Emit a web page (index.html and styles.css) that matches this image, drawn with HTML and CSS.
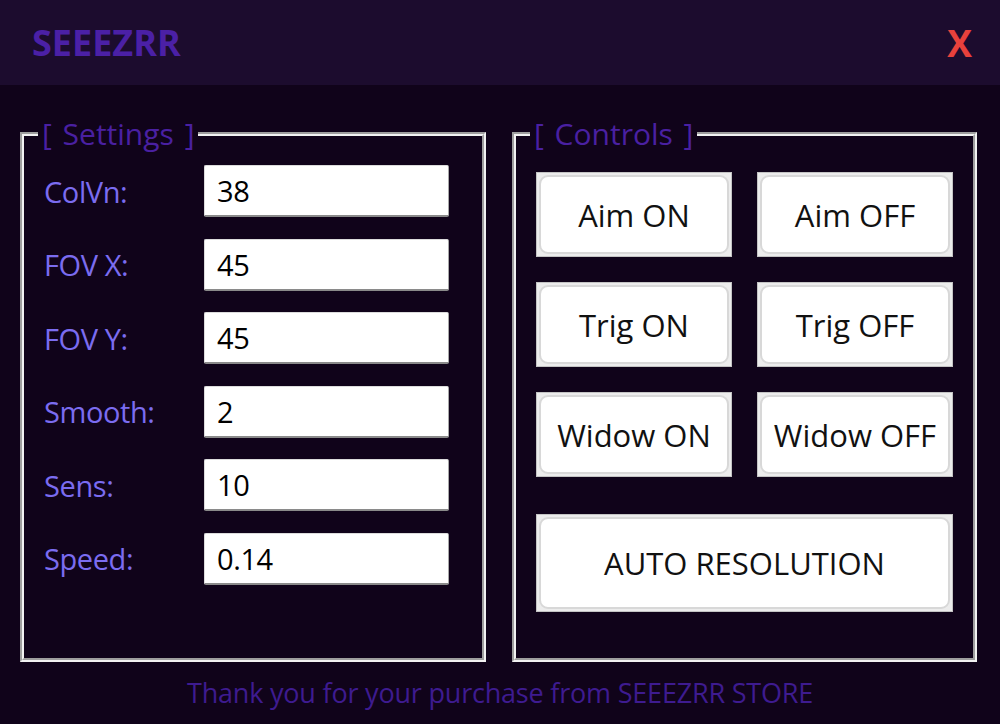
FILE: index.html
```html
<!DOCTYPE html>
<html lang="en">
<head>
    <meta charset="UTF-8">
    <meta name="viewport" content="width=device-width, initial-scale=1.0">
    <title>SEEEZRR</title>
    <link rel="stylesheet" href="styles.css">
</head>
<body>
    <div class="window">
        <div class="titlebar">
            <span class="title">SEEEZRR</span>
            <span class="close">X</span>
        </div>

        <div class="main">
            <fieldset class="group settings">
                <legend>[ Settings ]</legend>
                <div class="form">
                    <label>ColVn:</label>
                    <input type="text" class="field" value="38">
                    <label>FOV X:</label>
                    <input type="text" class="field" value="45">
                    <label>FOV Y:</label>
                    <input type="text" class="field" value="45">
                    <label>Smooth:</label>
                    <input type="text" class="field" value="2">
                    <label>Sens:</label>
                    <input type="text" class="field" value="10">
                    <label>Speed:</label>
                    <input type="text" class="field" value="0.14">
                </div>
            </fieldset>

            <fieldset class="group controls">
                <legend>[ Controls ]</legend>
                <div class="buttons">
                    <button><span>Aim ON</span></button>
                    <button><span>Aim OFF</span></button>
                    <button><span>Trig ON</span></button>
                    <button><span>Trig OFF</span></button>
                    <button><span>Widow ON</span></button>
                    <button><span>Widow OFF</span></button>
                    <button class="wide"><span>AUTO RESOLUTION</span></button>
                </div>
            </fieldset>
        </div>

        <div class="footer">Thank you for your purchase from SEEEZRR STORE</div>
    </div>
</body>
</html>
```

FILE: styles.css
```css
/* window */
body {
    margin: 0;
    padding: 0;
    background-color: #10031a;
    font-family: "Open Sans", "Noto Sans", sans-serif;
}

.window {
    width: 1000px;
    height: 724px;
    background-color: #10031a;
}

.titlebar {
    height: 85px;
    background-color: #1c0c2e;
    display: flex;
    align-items: center;
    justify-content: space-between;
    padding: 0 28px 0 32px;
}

.title {
    color: #4b20a6;
    font-size: 36px;
    font-weight: 700;
}

.close {
    color: #e8413c;
    font-size: 37px;
    font-weight: 700;
}

.main {
    height: 577px;
    box-sizing: border-box;
    padding: 33px 0 0 20px;
    display: flex;
    gap: 26px;
}

/* group boxes */
.group {
    box-sizing: border-box;
    height: 544px;
    margin: 0;
    border: 4px groove #f2f2f2;
    padding: 0 20px;
}

.group legend {
    margin-left: -6px;
    padding: 0 4px;
    height: 32px;
    line-height: 32px;
    color: #4a20a2;
    font-size: 30px;
    word-spacing: 3px;
}

.settings {
    width: 466px;
    padding-top: 15px;
}

.controls {
    width: 465px;
    padding-top: 22px;
}

/* settings */
.form {
    display: grid;
    grid-template-columns: 160px 245px;
    grid-auto-rows: 52px;
    row-gap: 21.6px;
    align-items: center;
}

.form label {
    color: #7b6cf0;
    font-size: 29px;
    letter-spacing: -0.4px;
}

.field {
    box-sizing: border-box;
    width: 245px;
    height: 52px;
    margin: 0;
    padding: 0 12px;
    background-color: #fff;
    border: 1px solid #dcdcdc;
    border-right-color: #a8a8a8;
    border-bottom: 2px solid #8a8a8a;
    border-radius: 2px;
    font-family: "Open Sans", sans-serif;
    font-size: 29px;
    letter-spacing: -0.4px;
    color: #000;
    outline: none;
}

/* controls */
.buttons {
    display: grid;
    grid-template-columns: 1fr 1fr;
    grid-template-rows: 85px 85px 85px 110px;
    column-gap: 25px;
    row-gap: 25px;
}

.buttons button {
    margin: 0;
    padding: 2px;
    background-color: #ececec;
    border: 1px solid #c4c4c4;
    border-radius: 0;
    font-family: "Open Sans", sans-serif;
    font-size: 31px;
    color: #111;
    cursor: pointer;
}

.buttons button span {
    display: flex;
    align-items: center;
    justify-content: center;
    box-sizing: border-box;
    height: 100%;
    background-color: #fff;
    border: 2px solid #d8d8d8;
    border-radius: 9px;
}

.buttons .wide {
    grid-column: span 2;
    margin-top: 12px;
}

.footer {
    height: 62px;
    line-height: 62px;
    text-align: center;
    color: #3e1b90;
    font-size: 27px;
    letter-spacing: -0.2px;
}
```
